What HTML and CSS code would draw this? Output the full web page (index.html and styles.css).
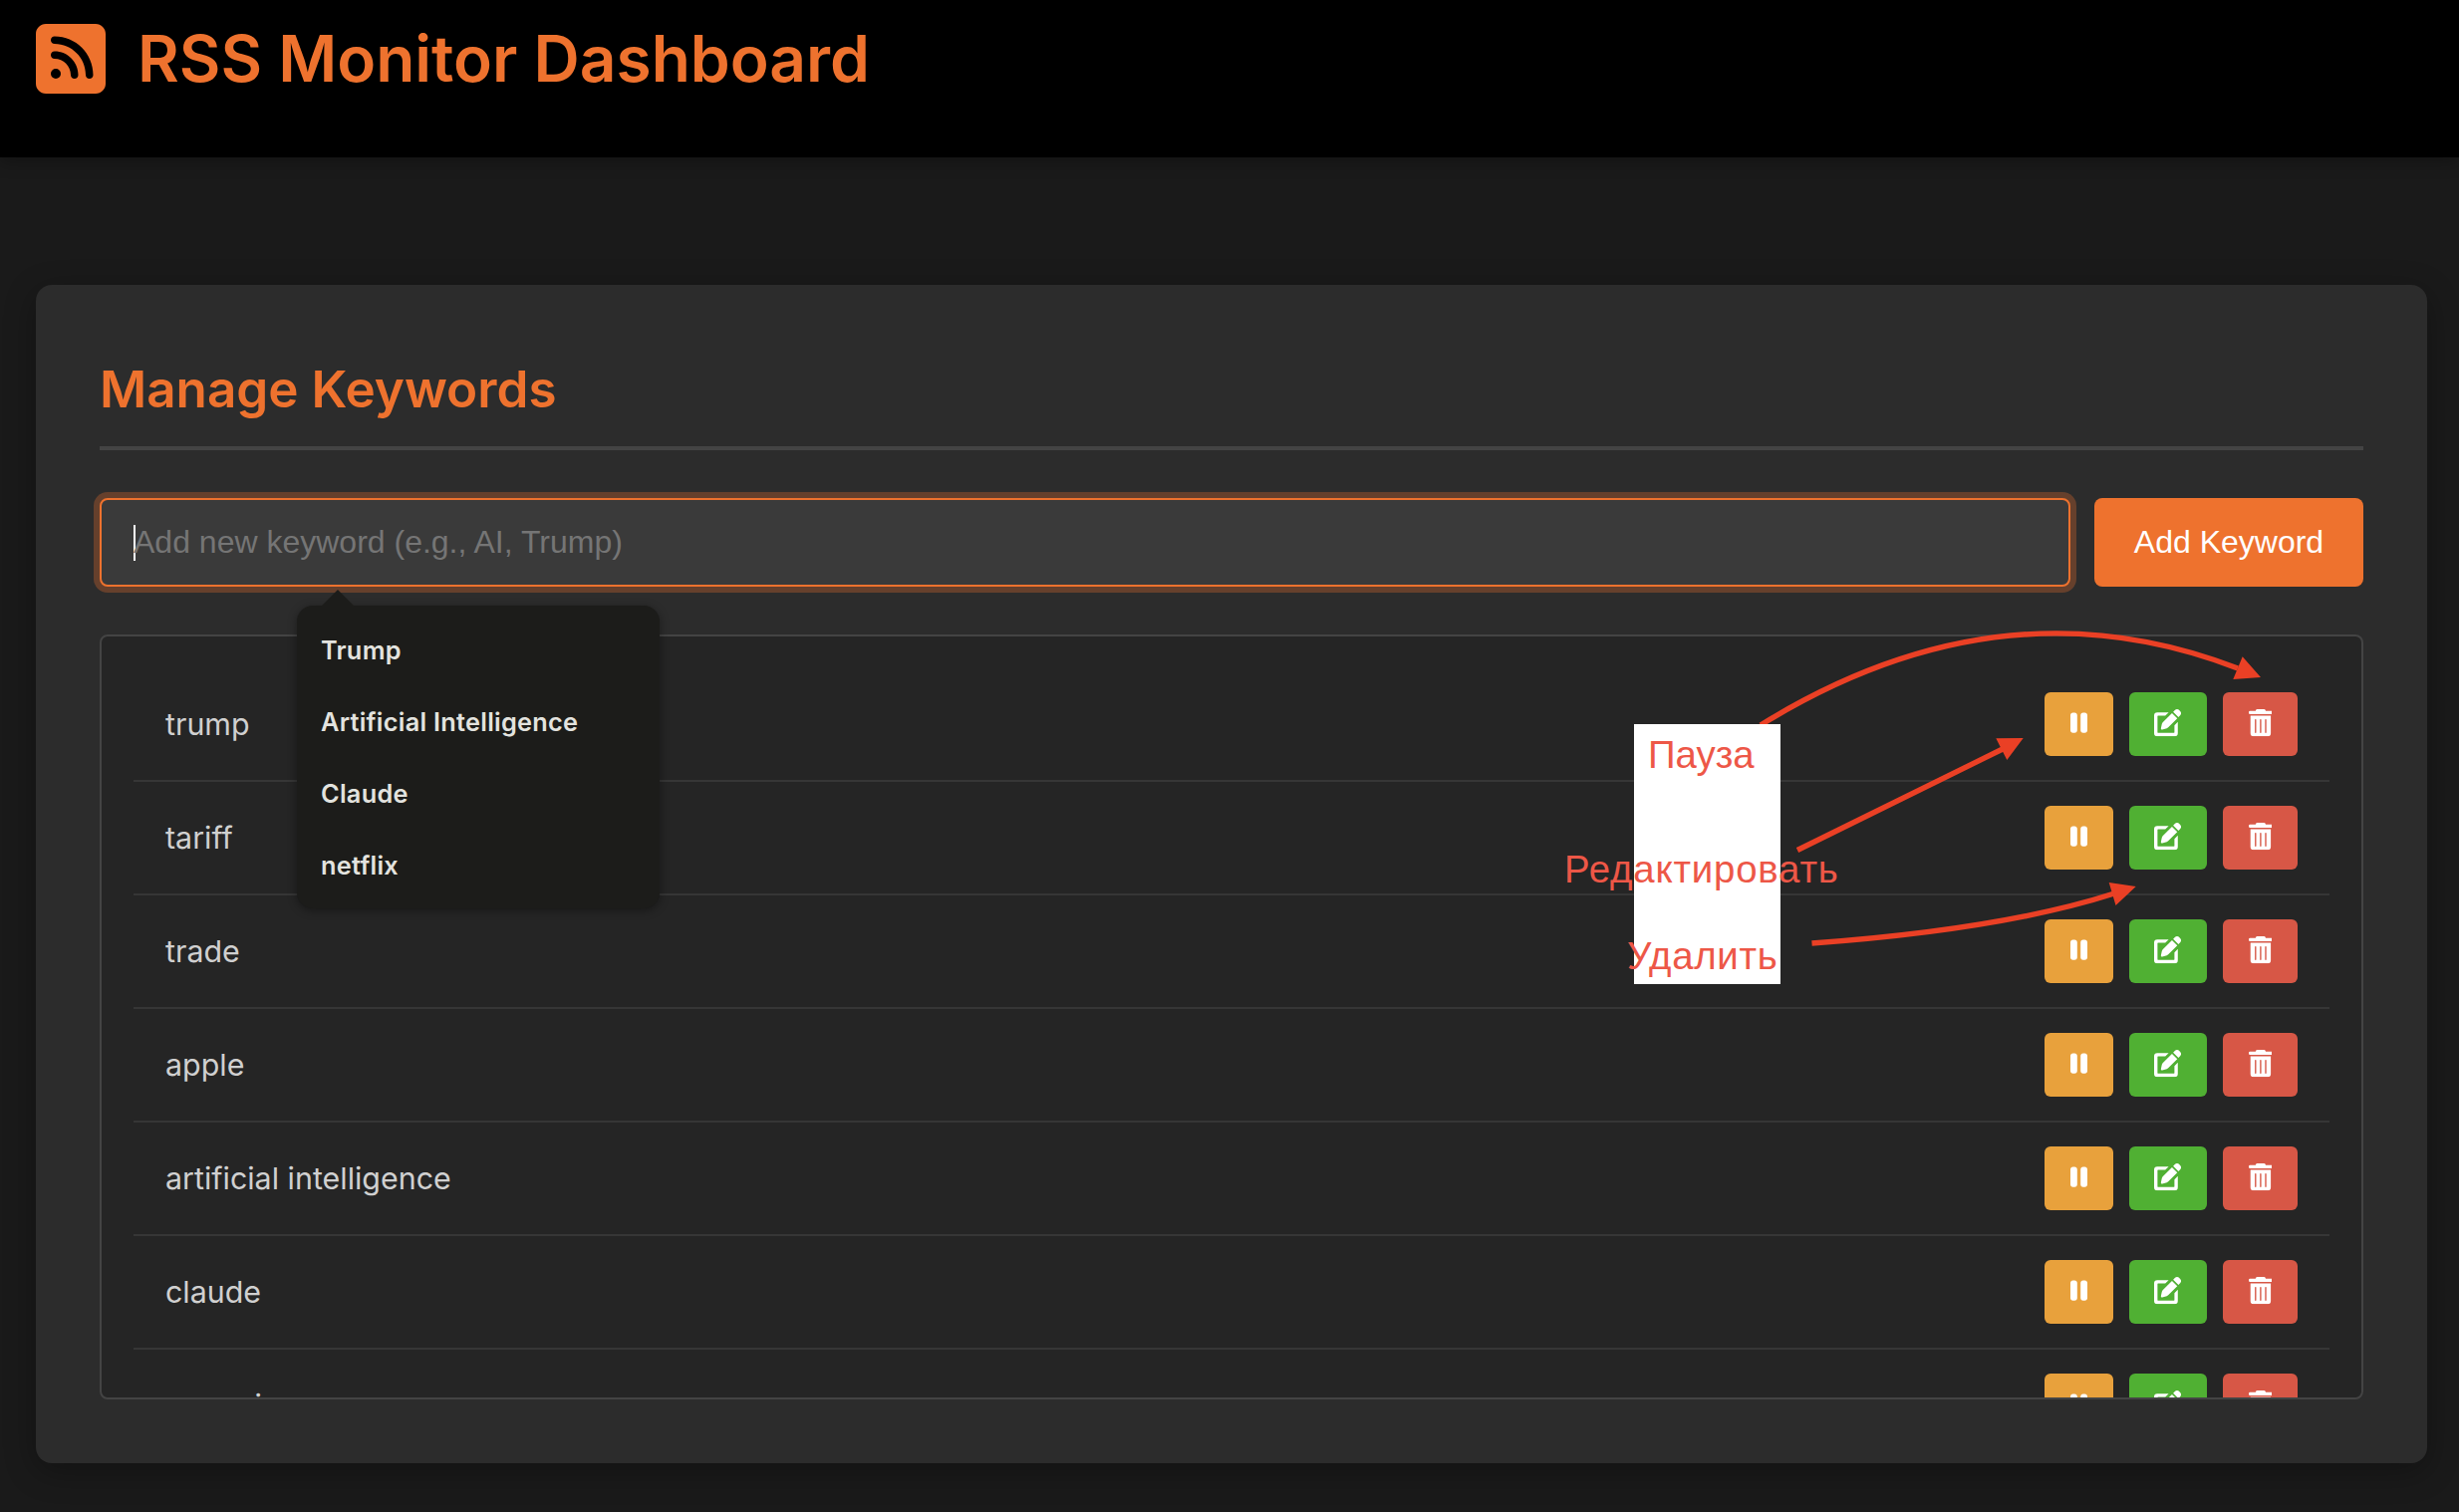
FILE: index.html
```html
<!DOCTYPE html>
<html lang="en">
<head>
<meta charset="utf-8">
<title>RSS Monitor Dashboard</title>
<link rel="stylesheet" href="styles.css">
</head>
<body>
<svg class="sprite" aria-hidden="true">
  <symbol id="i-pause" viewBox="0 0 320 512"><path d="M48 64C21.5 64 0 85.5 0 112V400c0 26.5 21.5 48 48 48H80c26.5 0 48-21.5 48-48V112c0-26.5-21.5-48-48-48H48zm192 0c-26.5 0-48 21.5-48 48V400c0 26.5 21.5 48 48 48h32c26.5 0 48-21.5 48-48V112c0-26.5-21.5-48-48-48H240z"/></symbol>
  <symbol id="i-edit" viewBox="0 0 512 512"><path d="M275 60H60A60 60 0 0 0 0 120V452a60 60 0 0 0 60 60H388a60 60 0 0 0 60-60V240L384 304V440Q384 448 376 448H72Q64 448 64 440V132Q64 124 72 124H211ZM338 74L438 174L262 350Q252 358 240 362L154 384Q124 390 130 360L146 284Q150 266 162 250ZM360 50L396 14Q440-18 484 28Q530 72 496 114L460 150Z"/></symbol>
  <symbol id="i-trash" viewBox="0 0 448 512"><path d="M135 16Q142 0 160 0H288Q306 0 313 16L320 32H424Q448 32 448 56V72Q448 96 424 96H24Q0 96 0 72V56Q0 32 24 32H128ZM32 124H416V456Q416 512 360 512H88Q32 512 32 456ZM128 186Q115 186 115 199V437Q115 450 128 450T141 437V199Q141 186 128 186ZM224 186Q211 186 211 199V437Q211 450 224 450T237 437V199Q237 186 224 186ZM320 186Q307 186 307 199V437Q307 450 320 450T333 437V199Q333 186 320 186Z" fill-rule="evenodd"/></symbol>
</svg>
<header class="header">
  <svg class="logo" viewBox="0 0 448 512"><path d="M64 32C28.7 32 0 60.7 0 96V416c0 35.3 28.7 64 64 64H384c35.3 0 64-28.7 64-64V96c0-35.3-28.7-64-64-64H64zM96 136c0-13.3 10.7-24 24-24c137 0 248 111 248 248c0 13.3-10.7 24-24 24s-24-10.7-24-24c0-110.5-89.5-200-200-200c-13.3 0-24-10.7-24-24zm0 96c0-13.3 10.7-24 24-24c83.9 0 152 68.1 152 152c0 13.3-10.7 24-24 24s-24-10.7-24-24c0-57.4-46.6-104-104-104c-13.3 0-24-10.7-24-24zm0 120a32 32 0 1 1 64 0 32 32 0 1 1 -64 0z"/></svg>
  <h1 class="title">RSS Monitor Dashboard</h1>
</header>
<main class="card">
  <h2 class="card-title">Manage Keywords</h2>
  <form class="form">
    <div class="field">
      <span class="caret"></span><span class="placeholder">Add new keyword (e.g., AI, Trump)</span>
      <div class="suggest">
        <span class="suggest-item">Trump</span>
        <span class="suggest-item">Artificial Intelligence</span>
        <span class="suggest-item">Claude</span>
        <span class="suggest-item">netflix</span>
      </div>
    </div>
    <button class="add" type="button">Add Keyword</button>
  </form>
  <ul class="list">
    <li class="row"><span class="word">trump</span><div class="actions"><button class="btn pause" type="button"><svg><use href="#i-pause"/></svg></button><button class="btn edit" type="button"><svg><use href="#i-edit"/></svg></button><button class="btn trash" type="button"><svg><use href="#i-trash"/></svg></button></div></li>
    <li class="row"><span class="word">tariff</span><div class="actions"><button class="btn pause" type="button"><svg><use href="#i-pause"/></svg></button><button class="btn edit" type="button"><svg><use href="#i-edit"/></svg></button><button class="btn trash" type="button"><svg><use href="#i-trash"/></svg></button></div></li>
    <li class="row"><span class="word">trade</span><div class="actions"><button class="btn pause" type="button"><svg><use href="#i-pause"/></svg></button><button class="btn edit" type="button"><svg><use href="#i-edit"/></svg></button><button class="btn trash" type="button"><svg><use href="#i-trash"/></svg></button></div></li>
    <li class="row"><span class="word">apple</span><div class="actions"><button class="btn pause" type="button"><svg><use href="#i-pause"/></svg></button><button class="btn edit" type="button"><svg><use href="#i-edit"/></svg></button><button class="btn trash" type="button"><svg><use href="#i-trash"/></svg></button></div></li>
    <li class="row"><span class="word">artificial intelligence</span><div class="actions"><button class="btn pause" type="button"><svg><use href="#i-pause"/></svg></button><button class="btn edit" type="button"><svg><use href="#i-edit"/></svg></button><button class="btn trash" type="button"><svg><use href="#i-trash"/></svg></button></div></li>
    <li class="row"><span class="word">claude</span><div class="actions"><button class="btn pause" type="button"><svg><use href="#i-pause"/></svg></button><button class="btn edit" type="button"><svg><use href="#i-edit"/></svg></button><button class="btn trash" type="button"><svg><use href="#i-trash"/></svg></button></div></li>
    <li class="row"><span class="word">openai</span><div class="actions"><button class="btn pause" type="button"><svg><use href="#i-pause"/></svg></button><button class="btn edit" type="button"><svg><use href="#i-edit"/></svg></button><button class="btn trash" type="button"><svg><use href="#i-trash"/></svg></button></div></li>
  </ul>
</main>
<svg class="arrows" viewBox="0 0 2468 1518">
  <path class="line" d="M1767 728Q2008 579 2246 671"/>
  <path class="line" d="M1804 853.5L2012 751"/>
  <path class="line" d="M1818.500 947Q2010 933 2122 897"/>
  <path class="head" d="M2269 680L2250.7 659.3L2241.3 682zM2030.7 741L2003.3 741.3L2014.3 763zM2143.7 890L2116.7 886L2123.500 909z"/>
</svg>
<div class="note-box"></div>
<span class="note note-pause">Пауза</span>
<span class="note note-edit">Редактировать</span>
<span class="note note-delete">Удалить</span>
</body>
</html>
```
FILE: styles.css
```css
* { box-sizing: border-box; }
body {
  margin: 0;
  height: 1518px;
  overflow: hidden;
  position: relative;
  background: #1a1a1a;
  font-family: Inter, sans-serif;
  color: #d0d0d0;
}
.sprite { display: none; }
.header {
  height: 158px;
  padding: 19px 36px;
  display: flex;
  align-items: flex-start;
  gap: 32px;
  background: #000;
  box-shadow: 0 4px 16px rgba(0, 0, 0, .3);
}
.logo { width: 70px; height: 80px; fill: #ee722e; }
.title {
  margin: 1px 0 0;
  font-size: 64px;
  line-height: 78px;
  font-weight: 600;
  color: #ee722e;
  white-space: nowrap;
}
.card {
  margin: 128px 32px 0 36px;
  height: 1183px;
  padding: 64px;
  border-radius: 16px;
  background: #2c2c2c;
  box-shadow: 0 8px 32px rgba(0, 0, 0, .3);
}
.card-title {
  margin: 0 0 48px;
  height: 102px;
  padding-top: 9px;
  border-bottom: 4px solid #444;
  font-size: 51.2px;
  line-height: 62px;
  font-weight: 600;
  color: #ee722e;
}
.form { display: flex; gap: 24px; margin: 0 0 48px; }
.field {
  flex: 1;
  position: relative;
  height: 89px;
  padding: 0 32px;
  display: flex;
  align-items: center;
  border: 2px solid #ee722e;
  border-radius: 8px;
  background: #3a3a3a;
  box-shadow: 0 0 0 6px rgba(238, 114, 46, .3);
}
.caret { flex: none; width: 2px; height: 36px; margin-right: -2px; background: #fff; }
.placeholder {
  font-family: "Liberation Sans", Arial, sans-serif;
  font-size: 32px;
  color: #757575;
}
.add {
  width: 270px;
  height: 89px;
  padding: 0;
  border: 0;
  border-radius: 8px;
  background: #ee722e;
  color: #fff;
  font: 32px "Liberation Sans", Arial, sans-serif;
}
.suggest {
  position: absolute;
  left: 196px;
  top: 106px;
  z-index: 2;
  width: 364px;
  height: 304px;
  padding: 9px 24px;
  border-radius: 16px;
  background: #1c1c1a;
  box-shadow: 0 2px 10px rgba(0, 0, 0, .4);
}
.suggest::before {
  content: "";
  position: absolute;
  left: 24px;
  top: -16px;
  width: 34px;
  height: 17px;
  background: #1c1c1a;
  clip-path: polygon(50% 0, 100% 100%, 0 100%);
}
.suggest-item {
  display: block;
  height: 72px;
  line-height: 72px;
  font-size: 25.3px;
  letter-spacing: .28px;
  font-weight: 600;
  color: #e3e3df;
  white-space: nowrap;
}
.list {
  margin: 0;
  height: 768px;
  padding: 32px;
  overflow: hidden;
  list-style: none;
  border: 2px solid #444;
  border-radius: 8px;
  background: #252525;
}
.row {
  height: 114px;
  padding: 24px 32px;
  display: flex;
  align-items: center;
  justify-content: space-between;
  border-bottom: 2px solid #363636;
}
.word { font-size: 30.4px; line-height: 48px; }
.actions { display: flex; gap: 16px; }
.btn {
  height: 64px;
  padding: 17.4px 25.6px 0;
  border: 0;
  border-radius: 6px;
  display: flex;
  align-items: flex-start;
}
.btn svg { height: 27.2px; fill: #fff; }
.pause { background: #e8a13c; }
.pause svg { width: 17px; }
.edit { background: #50b033; }
.edit svg { width: 27.2px; }
.trash { background: #d75746; }
.trash svg { width: 23.8px; }
.arrows {
  position: absolute;
  left: 0;
  top: 0;
  z-index: 3;
  width: 2468px;
  height: 1518px;
}
.line { fill: none; stroke: #ea4025; stroke-width: 5.4; }
.head { fill: #ea4025; }
.note-box {
  position: absolute;
  z-index: 4;
  left: 1640px;
  top: 727px;
  width: 147px;
  height: 261px;
  background: #fff;
}
.note {
  position: absolute;
  z-index: 5;
  font: 38.4px/44px "Liberation Sans", Arial, sans-serif;
  color: #ed5747;
  white-space: nowrap;
}
.note-pause { left: 1654px; top: 736px; }
.note-edit { left: 1570px; top: 851px; letter-spacing: .8px; }
.note-delete { left: 1633px; top: 938px; letter-spacing: .7px; }
```
